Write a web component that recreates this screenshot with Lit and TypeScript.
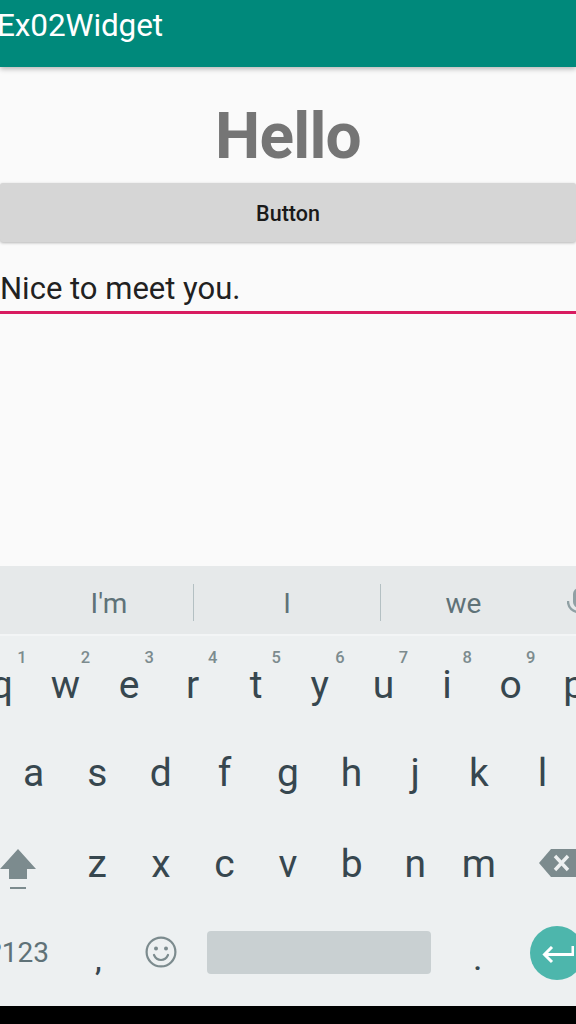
import { LitElement, html, css, svg } from "lit";
import { customElement } from "lit/decorators.js";

const shift = svg`<svg class="icon shift" viewBox="0 0 36 40"><path fill="#7c8b8e" d="M18 0 36 20H27V30H9V20H0Z"/><rect fill="#7c8b8e" x="10" y="38" width="16" height="2"/></svg>`;
const back = svg`<svg class="icon back" viewBox="0 0 40 28"><path fill="#7c8b8e" d="M12 0H40V28H12L0 14Z"/><path stroke="#edf0f1" stroke-width="3.4" fill="none" d="M16 7 29 21M29 7 16 21"/></svg>`;
const smile = svg`<svg class="icon smile" viewBox="0 0 32 32" fill="none" stroke="#7c8b8e" stroke-width="2.2"><circle cx="16" cy="16" r="14.4"/><path d="M9 19c1.600 3.600 4 5 7 5s5.400-1.400 7-5" stroke-linecap="round"/><circle cx="11" cy="12.500" r="2" fill="#7c8b8e" stroke="none"/><circle cx="21" cy="12.500" r="2" fill="#7c8b8e" stroke="none"/></svg>`;
const enter = svg`<svg class="icon enterglyph" viewBox="0 0 32 18" fill="none" stroke="#fff" stroke-width="3"><path d="M31 0V8.500H3M10 1 2.500 8.500 10 16"/></svg>`;
const mic = svg`<svg class="icon mic" viewBox="0 0 24 32"><rect fill="#90a0a4" x="6" y="0" width="12" height="20" rx="6"/><path fill="none" stroke="#90a0a4" stroke-width="2.400" d="M1 13c0 7 5 11 11 11s11-4 11-11M12 24v8"/></svg>`;

@customElement("app-root")
export class AppRoot extends LitElement {
  static styles = css`
    :host { display: block; width: 576px; height: 1024px; overflow: hidden; background: #fafafa; font-family: Roboto, sans-serif; }
    .screen { display: flex; flex-direction: column; height: 1024px; }
    .appbar { height: 67px; flex: none; background: #00897b; color: #fff; font-size: 31.500px; font-weight: 400; line-height: 52px; box-shadow: 0 2px 5px rgba(0,0,0,.28); text-indent: -3px; white-space: nowrap; position: relative; letter-spacing: -.1px; }
    .content { flex: 1; display: flex; flex-direction: column; }
    .hello { font-size: 64px; font-weight: 700; color: #757575; text-align: center; line-height: 76px; margin-top: 32px; height: 84px; letter-spacing: -.8px; }
    .btn { height: 59px; flex: none; background: #d6d6d6; border-radius: 3px; box-shadow: 0 1px 3px rgba(0,0,0,.28); color: #1a1a1a; font-size: 21.500px; font-weight: 500; display: flex; align-items: center; justify-content: center; padding-top: 2px; box-sizing: border-box; }
    .field { margin-top: 25px; height: 44px; border-bottom: 3px solid #d81b60; font-size: 31px; line-height: 44px; color: #212121; }
    .kbd { flex: none; height: 440px; background: #edf0f1; display: flex; flex-direction: column; overflow: hidden; }
    .sugg { height: 70px; flex: none; background: #e6e9ea; border-bottom: 2px solid #f3f5f6; box-sizing: border-box; display: grid; grid-template-columns: 193px 1px 186px 1px 1fr; align-items: center; position: relative; font-size: 28px; color: #5f7278; }
    .sugg .s { text-align: center; line-height: 68px; height: 68px; margin-top: 4px; }
    .sugg .s.a { padding-left: 25px; }
    .sugg .s.c { padding-right: 30px; }
    .sep { width: 1px; height: 37px; background: #b4c0c3; margin-top: 1px; }
    .mic { position: absolute; left: 567px; top: 22px; width: 24px; height: 32px; }
    .row { display: flex; height: 90.500px; flex: none; justify-content: center; }
    .row.top { width: 640px; margin-left: -32px; }
    .row.last { height: 100px; }
    .key { width: 63.600px; flex: none; position: relative; display: flex; align-items: center; justify-content: center; font-size: 39px; color: #37474f; line-height: 1; }
    .hint { position: absolute; right: 7px; top: 14px; font-size: 16.500px; font-weight: 500; color: #7c8b8e; }
    .top .key span.l { margin-top: 9px; }
    .mid .key span.l { margin-top: 4px; }
    .third .key span.l { margin-top: 4px; }
    .icon { display: block; }
    .shift { width: 36px; height: 40px; margin: 13px 0 0 -32px; }
    .back { width: 40px; height: 28px; margin: 1px 0 0 34px; flex: none; }
    .smile { width: 32px; height: 32px; margin: -12px 0 0 4px; }
    .num { font-size: 28px; color: #5f7278; white-space: nowrap; margin-top: -10px; margin-left: -26px; }
    .space { width: 224px; height: 43px; flex: none; margin: 23.500px 15px 0 16px; background: #c9d0d2; border-radius: 4px; }
    .punct { font-size: 30px; margin-top: 5px; font-weight: 500; }
    .punct.comma { margin-left: 6px; }
    .enter { position: absolute; left: 530px; top: 18.500px; width: 54px; height: 54px; border-radius: 50%; background: #4db6ac; display: flex; align-items: center; padding: 3px 0 0 12px; box-sizing: border-box; }
    .enterglyph { width: 32px; height: 18px; }
    .bottom { height: 18px; flex: none; background: #000; }
    .lastwrap { position: relative; justify-content: flex-start; width: 576px; }
  `;

  private lettered(letters: string) {
    return letters.split("").map((l) => html`<div class="key"><span class="l">${l}</span></div>`);
  }

  render() {
    const top = "qwertyuiop".split("");
    return html`
      <div class="screen">
        <div class="appbar">Ex02Widget</div>
        <div class="content">
          <div class="hello">Hello</div>
          <div class="btn">Button</div>
          <div class="field">Nice to meet you.</div>
        </div>
        <div class="kbd">
          <div class="sugg">
            <div class="s a">I'm</div><div class="sep"></div>
            <div class="s">I</div><div class="sep"></div>
            <div class="s c">we</div>
            ${mic}
          </div>
          <div class="row top">
            ${top.map((l, i) => html`<div class="key"><span class="l">${l}</span><span class="hint">${i < 9 ? i + 1 : ""}</span></div>`)}
          </div>
          <div class="row mid">${this.lettered("asdfghjkl")}</div>
          <div class="row third">
            <div class="key">${shift}</div>
            ${this.lettered("zxcvbnm")}
            <div class="key">${back}</div>
          </div>
          <div class="row last lastwrap">
            <div class="key"><span class="num">?123</span></div>
            <div class="key"><span class="punct comma">,</span></div>
            <div class="key">${smile}</div>
            <div class="space"></div>
            <div class="key"><span class="punct">.</span></div>
            <div class="enter">${enter}</div>
          </div>
        </div>
        <div class="bottom"></div>
      </div>
    `;
  }
}
